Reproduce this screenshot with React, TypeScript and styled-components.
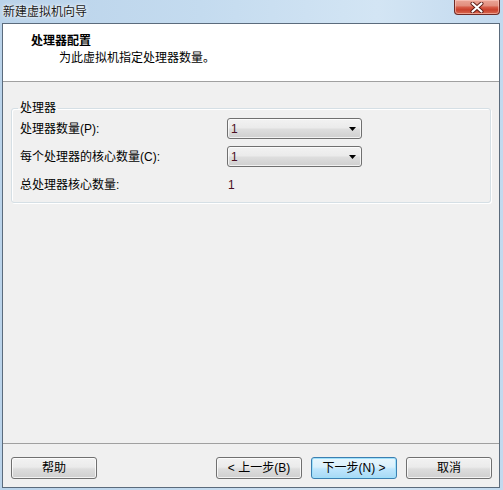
import React from "react";
import styled, { createGlobalStyle } from "styled-components";

const Global = createGlobalStyle`
  html, body { margin: 0; padding: 0; }
  body {
    width: 503px;
    height: 490px;
    overflow: hidden;
    font-family: "Liberation Sans", "Noto Sans CJK SC", sans-serif;
    font-size: 12px;
    color: #000;
  }
  #root { width: 503px; height: 490px; }
`;

const Window = styled.div`
  width: 503px;
  height: 490px;
  box-sizing: border-box;
  padding: 0 3px 2px 2px;
  display: flex;
  flex-direction: column;
  background: linear-gradient(to right, #bad3ea 0%, #c4dbef 40%, #d3e5f4 75%, #c2d9ee 100%);
`;

const TitleBar = styled.div`
  height: 23px;
  display: flex;
  justify-content: space-between;
  align-items: flex-start;
  flex-shrink: 0;
`;

const Title = styled.div`
  margin: 4px 0 0 1px;
  font-size: 12px;
  line-height: 16px;
  color: #1a1a1a;
  text-shadow: 0 0 5px rgba(255, 255, 255, 0.95), 0 0 2px rgba(255, 255, 255, 0.9);
`;

const CloseButton = styled.div`
  width: 46px;
  height: 15px;
  box-sizing: border-box;
  border: 1px solid #6e2a25;
  border-top: none;
  border-radius: 0 0 4px 4px;
  background: linear-gradient(
    #eaa597 0%,
    #e28e7e 40%,
    #d65b47 52%,
    #c9412d 70%,
    #d9694f 100%
  );
  box-shadow: inset 0 0 0 1px rgba(255, 210, 200, 0.55);
  display: flex;
  align-items: center;
  justify-content: center;
`;

const Client = styled.div`
  flex: 1;
  display: flex;
  flex-direction: column;
  border: 1px solid #5b6b7c;
  background: #f0f0f0;
  min-height: 0;
`;

const Header = styled.div`
  background: #fff;
  height: 48px;
  padding: 9px 0 0 28px;
  border-bottom: 1px solid #a0a0a0;
  flex-shrink: 0;
`;

const HeaderTitle = styled.div`
  font-weight: bold;
  font-size: 12px;
  line-height: 17px;
`;

const HeaderSubtitle = styled.div`
  margin-left: 28px;
  font-size: 12px;
  line-height: 17px;
`;

const Body = styled.div`
  flex: 1;
  padding: 18px 8px 0 8px;
`;

const Group = styled.fieldset`
  margin: 0;
  padding: 2px 6px 7px 6px;
  border: 1px solid #d5dfe5;
  border-radius: 3px;
  box-shadow: 1px 1px 0 #ffffff, inset 1px 1px 0 #ffffff;
`;

const Legend = styled.legend`
  padding: 0 2px;
  font-size: 12px;
  line-height: 16px;
`;

const Grid = styled.div`
  margin-left: 2px;
  display: grid;
  grid-template-columns: 207px 135px;
  grid-auto-rows: 21px;
  row-gap: 7px;
  align-items: center;
`;

const Label = styled.div`
  font-size: 12px;
  line-height: 16px;
`;

const Value = styled.div`
  font-size: 12px;
  line-height: 16px;
  color: #4a0f22;
  padding-left: 1px;
`;

const Combo = styled.div`
  height: 21px;
  box-sizing: border-box;
  border: 1px solid #707070;
  border-radius: 3px;
  background: linear-gradient(#f2f2f2 0%, #ebebeb 45%, #dddddd 55%, #cfcfcf 100%);
  box-shadow: inset 0 0 0 1px rgba(255, 255, 255, 0.7);
  display: flex;
  align-items: center;
  justify-content: space-between;
  padding: 0 5px 0 3px;
`;

const ComboText = styled.span`
  color: #4a0f22;
  line-height: 16px;
`;

const Footer = styled.div`
  flex-shrink: 0;
  border-top: 1px solid #a0a0a0;
  padding: 13px 7px 8px 8px;
  display: flex;
  justify-content: space-between;
`;

const ButtonGroup = styled.div`
  display: flex;
  gap: 9px;
`;

const Button = styled.div<{ $default?: boolean }>`
  width: 86px;
  height: 22px;
  box-sizing: border-box;
  border: 1px solid ${(p) => (p.$default ? "#3c7fb1" : "#707070")};
  border-radius: 3px;
  background: ${(p) =>
    p.$default
      ? "linear-gradient(#e8f6fd 0%, #d9f0fc 45%, #bee6fd 55%, #a7d9f5 100%)"
      : "linear-gradient(#f2f2f2 0%, #ebebeb 45%, #dddddd 55%, #cfcfcf 100%)"};
  box-shadow: inset 0 0 0 1px ${(p) => (p.$default ? "#9fe1fb" : "rgba(255,255,255,0.75)")};
  display: flex;
  align-items: center;
  justify-content: center;
  font-size: 12px;
  line-height: 16px;
  color: #000;
`;

const Arrow = () => (
  <svg width="7" height="4" viewBox="0 0 7 4">
    <polygon points="0,0 7,0 3.5,4" fill="#000" />
  </svg>
);

const CloseIcon = () => (
  <svg width="14" height="11" viewBox="0 0 14 11">
    <path d="M2.5 1.5 L11.5 9.5 M11.5 1.5 L2.5 9.5" stroke="#5a1a14" strokeWidth="4" strokeLinecap="round" />
    <path d="M2.5 1.5 L11.5 9.5 M11.5 1.5 L2.5 9.5" stroke="#ffffff" strokeWidth="2.2" strokeLinecap="round" />
  </svg>
);

export default function App() {
  return (
    <>
      <Global />
      <Window>
        <TitleBar>
          <Title>新建虚拟机向导</Title>
          <CloseButton>
            <CloseIcon />
          </CloseButton>
        </TitleBar>
        <Client>
          <Header>
            <HeaderTitle>处理器配置</HeaderTitle>
            <HeaderSubtitle>为此虚拟机指定处理器数量。</HeaderSubtitle>
          </Header>
          <Body>
            <Group>
              <Legend>处理器</Legend>
              <Grid>
                <Label>处理器数量(P):</Label>
                <Combo>
                  <ComboText>1</ComboText>
                  <Arrow />
                </Combo>
                <Label>每个处理器的核心数量(C):</Label>
                <Combo>
                  <ComboText>1</ComboText>
                  <Arrow />
                </Combo>
                <Label>总处理器核心数量:</Label>
                <Value>1</Value>
              </Grid>
            </Group>
          </Body>
          <Footer>
            <Button>帮助</Button>
            <ButtonGroup>
              <Button>&lt; 上一步(B)</Button>
              <Button $default>下一步(N) &gt;</Button>
              <Button>取消</Button>
            </ButtonGroup>
          </Footer>
        </Client>
      </Window>
    </>
  );
}
